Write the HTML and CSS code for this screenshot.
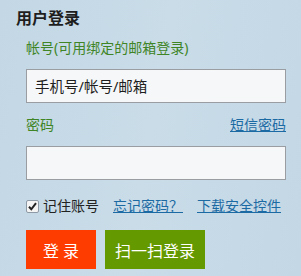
FILE: index.html
```html
<!DOCTYPE html>
<html lang="zh-CN">
<head>
<meta charset="utf-8">
<link rel="stylesheet" href="styles.css">
</head>
<body>
<div class="login">
  <div class="title">用户登录</div>
  <div class="label">帐号(可用绑定的邮箱登录)</div>
  <div class="input"><span class="placeholder">手机号/帐号/邮箱</span></div>
  <div class="row">
    <span class="label">密码</span>
    <a class="link">短信密码</a>
  </div>
  <div class="input"></div>
  <div class="options">
    <span class="check"><svg width="13" height="13" viewBox="0 0 13 13"><rect x="0.5" y="0.5" width="12" height="12" rx="1.5" fill="#f4f4f4" stroke="#8d9aa5"/><path d="M3 6.8 L5.3 9.3 L10 3.2" fill="none" stroke="#222" stroke-width="2"/></svg></span>
    <span class="remember">记住账号</span>
    <a class="link forget">忘记密码？</a>
    <a class="link">下载安全控件</a>
  </div>
  <div class="buttons">
    <div class="btn red">登 录</div>
    <div class="btn green">扫一扫登录</div>
  </div>
</div>
</body>
</html>
```
FILE: styles.css
```css
html, body {
  margin: 0;
  padding: 0;
}
body {
  width: 301px;
  height: 276px;
  background: linear-gradient(100deg, #c3d7e5 0%, #c9dce8 50%, #c3d7e5 100%);
  font-family: "Noto Sans", "Noto Sans CJK SC", sans-serif;
  overflow: hidden;
}
.login {
  display: flex;
  flex-direction: column;
  padding: 8px 15px 0 26px;
}
.title {
  margin-left: -10px;
  font-size: 16px;
  font-weight: bold;
  line-height: 20px;
  height: 20px;
  color: #1e1e1e;
}
.label {
  font-size: 14px;
  line-height: 20px;
  height: 20px;
  color: #3f8526;
}
.login > .label {
  margin-top: 10px;
}
.input {
  box-sizing: border-box;
  width: 260px;
  height: 34px;
  margin-top: 11px;
  border: 1px solid #9a9ea3;
  background: #f6f7f8;
  display: flex;
  align-items: center;
  padding-left: 8px;
}
.placeholder {
  font-size: 14.5px;
  color: #1e1e1e;
  line-height: 20px;
}
.row {
  margin-top: 12px;
  width: 260px;
  display: flex;
  justify-content: space-between;
  align-items: center;
  height: 20px;
}
.link {
  font-size: 14px;
  line-height: 20px;
  color: #1c6aa3;
  text-decoration: underline;
  cursor: pointer;
}
.options {
  margin-top: 16px;
  height: 20px;
  display: flex;
  align-items: center;
}
.check {
  display: flex;
  width: 13px;
  height: 13px;
  margin-right: 4px;
}
.remember {
  font-size: 14px;
  line-height: 20px;
  color: #222;
}
.forget {
  margin-left: 14px;
  margin-right: 14px;
}
.buttons {
  margin-top: 14px;
  display: flex;
  gap: 9px;
}
.btn {
  height: 39px;
  display: flex;
  align-items: center;
  justify-content: center;
  font-size: 16px;
  color: #ffffff;
}
.red {
  width: 70px;
  background: #ff3c00;
}
.green {
  width: 100px;
  background: #659900;
}
```
